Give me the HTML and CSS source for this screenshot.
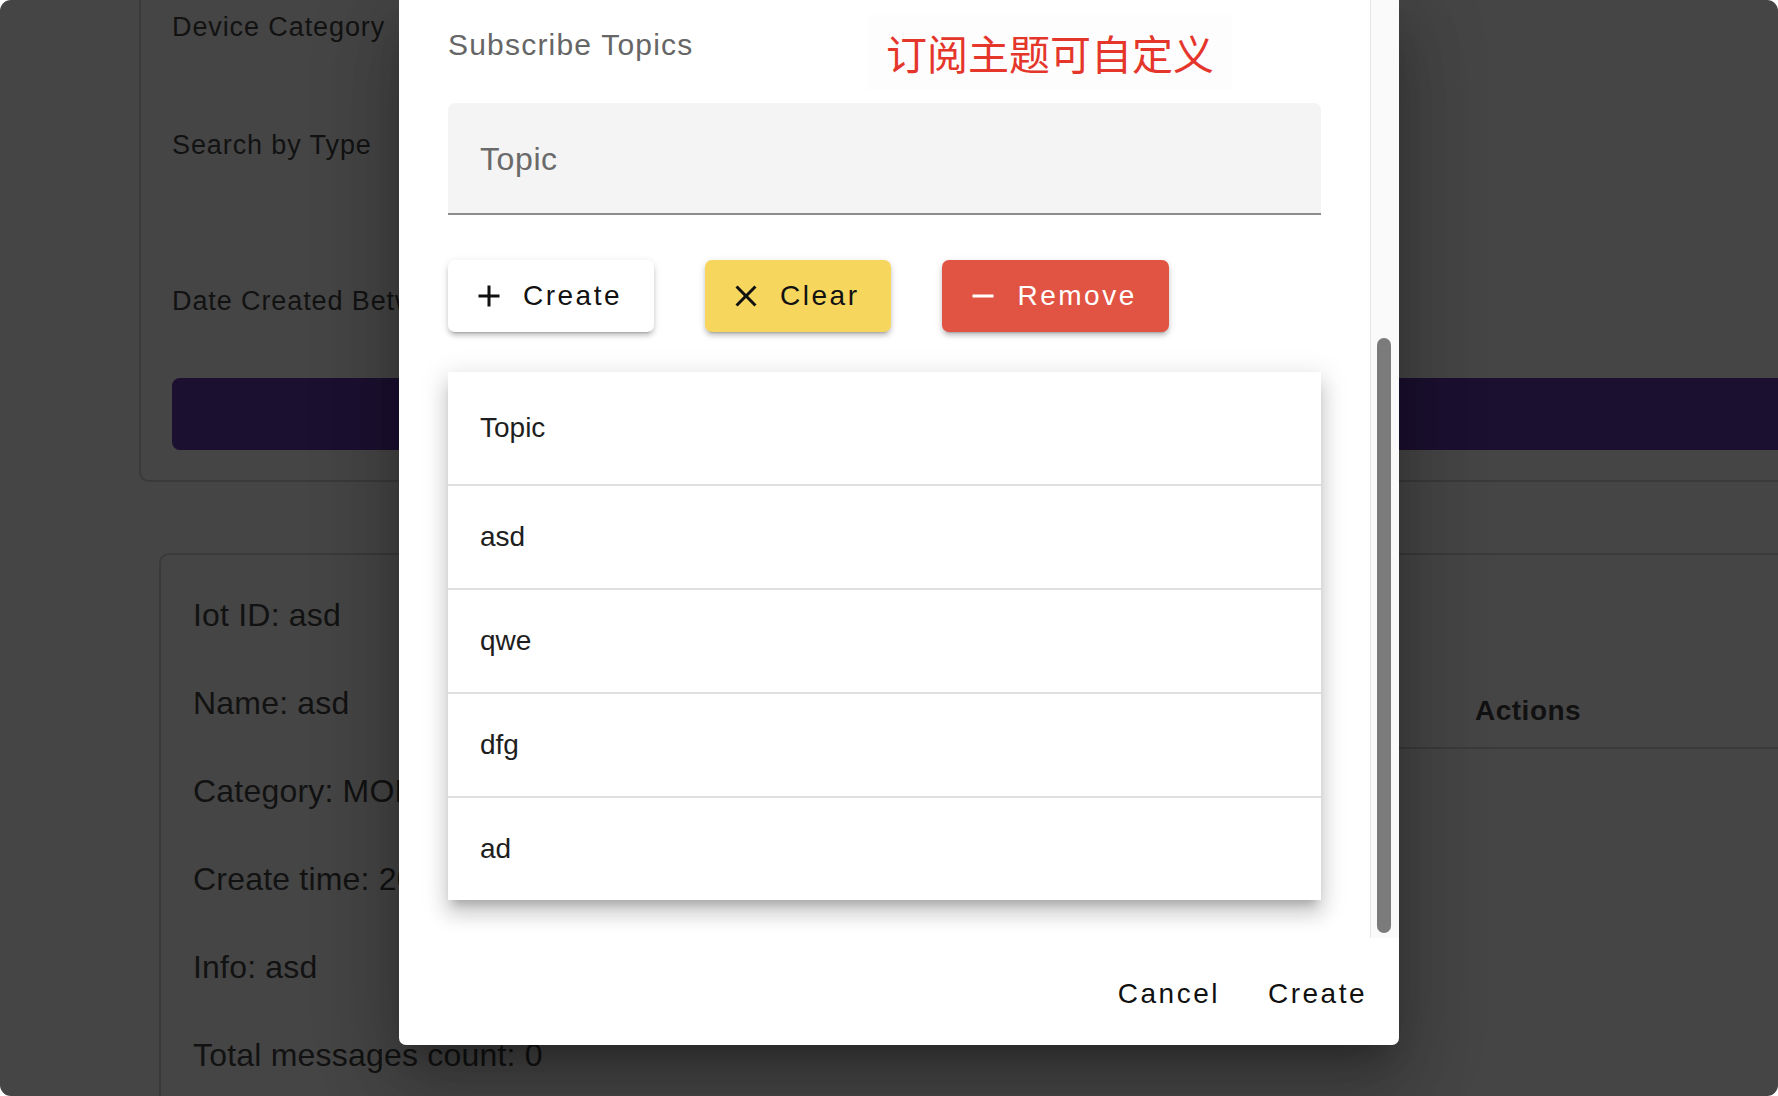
FILE: index.html
```html
<!DOCTYPE html>
<html lang="en">
<head>
<meta charset="utf-8">
<title>Subscribe Topics</title>
<link rel="stylesheet" href="styles.css">
</head>
<body>
<div class="window">
  <div class="page">
    <section class="filter-card">
      <div class="filter-label first">Device Category</div>
      <div class="filter-label second">Search by Type</div>
      <div class="filter-label third">Date Created Between</div>
      <div class="search-bar"></div>
    </section>
    <section class="device-card">
      <div class="device-info">
        <div class="info-line">Iot ID: asd</div>
        <div class="info-line">Name: asd</div>
        <div class="info-line">Category: MONITOR</div>
        <div class="info-line">Create time: 2023-05-12 10:21:33</div>
        <div class="info-line">Info: asd</div>
        <div class="info-line">Total messages count: 0</div>
      </div>
      <div class="device-table">
        <div class="thead">
          <span class="th">Topic</span>
          <span class="th">Message</span>
          <span class="th actions">Actions</span>
        </div>
      </div>
    </section>
  </div>

  <div class="dialog">
    <div class="dialog-body">
      <div class="dialog-content">
        <div class="field-label">Subscribe Topics</div>
        <div class="text-field"><span class="placeholder">Topic</span></div>
        <div class="actions-row">
          <button class="btn btn-white">
            <svg class="btn-icon" viewBox="0 0 24 24"><path d="M19 13h-6v6h-2v-6H5v-2h6V5h2v6h6v2z"/></svg>
            <span class="btn-text">Create</span>
          </button>
          <button class="btn btn-yellow">
            <svg class="btn-icon" viewBox="0 0 24 24"><path d="M19 6.41L17.59 5 12 10.59 6.41 5 5 6.41 10.59 12 5 17.59 6.41 19 12 13.41 17.59 19 19 17.59 13.41 12z"/></svg>
            <span class="btn-text">Clear</span>
          </button>
          <button class="btn btn-red">
            <svg class="btn-icon" viewBox="0 0 24 24"><path d="M19 13H5v-2h14v2z"/></svg>
            <span class="btn-text">Remove</span>
          </button>
        </div>
        <ul class="topic-list">
          <li class="topic-row head">Topic</li>
          <li class="topic-row">asd</li>
          <li class="topic-row">qwe</li>
          <li class="topic-row">dfg</li>
          <li class="topic-row last">ad</li>
        </ul>
      </div>
      <div class="scrollbar"><div class="thumb"></div></div>
    </div>
    <div class="dialog-footer">
      <button class="text-btn">Cancel</button>
      <button class="text-btn">Create</button>
    </div>
    <div class="annotation">订阅主题可自定义</div>
  </div>
</div>
</body>
</html>
```

FILE: styles.css
```css
* { box-sizing: border-box; }

html, body {
  margin: 0;
  padding: 0;
  background: #ffffff;
}

body {
  font-family: "Liberation Sans", Arial, sans-serif;
  width: 1778px;
  height: 1096px;
  overflow: hidden;
}

.window {
  position: relative;
  width: 1778px;
  height: 1096px;
  border-radius: 11px;
  overflow: hidden;
  background: #454545;
}

.page {
  display: flex;
  flex-direction: column;
}

/* background filter card */
.filter-card {
  margin: -30px -60px 0 139px;
  border: 2px solid #3a3a3a;
  border-radius: 10px;
  padding: 39px 0 30px 31px;
  display: flex;
  flex-direction: column;
}

.filter-label {
  font-size: 27px;
  line-height: 32px;
  height: 32px;
  letter-spacing: 0.9px;
  color: #121212;
  white-space: nowrap;
}
.filter-label.second { margin-top: 86px; }
.filter-label.third { margin-top: 124px; }

.search-bar {
  margin-top: 61px;
  height: 72px;
  border-radius: 8px;
  background: #1b1030;
}

/* background device card */
.device-card {
  margin: 71px -60px 0 159px;
  border: 2px solid #3a3a3a;
  border-radius: 10px;
  display: flex;
  height: 700px;
}

.device-info {
  width: 640px;
  padding: 41px 0 0 32px;
  display: flex;
  flex-direction: column;
  gap: 50px;
}

.info-line {
  font-size: 32px;
  line-height: 38px;
  letter-spacing: 0.2px;
  color: #121212;
  white-space: nowrap;
}

.device-table {
  flex: 1;
  padding-top: 120px;
}

.thead {
  display: flex;
  height: 74px;
  align-items: center;
  border-bottom: 2px solid #3a3a3a;
}

.th {
  flex: 1;
  font-size: 28px;
  font-weight: 700;
  color: #111;
  letter-spacing: 0.5px;
}

.th.actions {
  flex: 0 0 361px;
}

/* dialog */
.dialog {
  position: absolute;
  left: 399px;
  top: 0;
  width: 1000px;
  height: 1045px;
  background: #ffffff;
  border-radius: 0 0 7px 7px;
  box-shadow: 0 20px 27px -13px rgba(0,0,0,0.25),
              0 43px 68px 5px rgba(0,0,0,0.16),
              0 16px 83px 14px rgba(0,0,0,0.14);
  display: flex;
  flex-direction: column;
}

.dialog-body {
  display: flex;
  height: 938px;
}

.dialog-content {
  flex: 1;
  padding: 27px 49px 0 49px;
  overflow: hidden;
}

.field-label {
  font-size: 30px;
  line-height: 35px;
  letter-spacing: 1.2px;
  color: #666666;
}

.text-field {
  margin-top: 41px;
  height: 112px;
  padding: 37px 32px 0;
  background: #f4f4f4;
  border-bottom: 2px solid #8c8c8c;
  border-radius: 7px 7px 0 0;
}

.placeholder {
  display: block;
  font-size: 32px;
  line-height: 1.2;
  letter-spacing: 0.6px;
  color: #6a6a6a;
}

.actions-row {
  margin-top: 45px;
  display: flex;
  gap: 51px;
}

.btn {
  height: 72px;
  display: flex;
  align-items: center;
  gap: 16px;
  padding: 0 32px 0 23px;
  border: none;
  border-radius: 7px;
  font-family: "Liberation Sans", Arial, sans-serif;
  font-size: 28px;
  letter-spacing: 2.5px;
  cursor: pointer;
  box-shadow: 0 5px 2px -4px rgba(0,0,0,0.2),
              0 4px 4px 0 rgba(0,0,0,0.14),
              0 2px 9px 0 rgba(0,0,0,0.12);
}

.btn-icon {
  width: 36px;
  height: 36px;
  fill: currentColor;
  flex: none;
}

.btn-white { background: #ffffff; color: #111; }
.btn-yellow { background: #f7d65e; color: #111; }
.btn-red { background: #e15443; color: #ffffff; }

.topic-list {
  list-style: none;
  margin: 40px 0 0;
  padding: 10px 0 0;
  background: #ffffff;
  box-shadow: 0 9px 9px -5px rgba(0,0,0,0.2),
              0 14px 18px 2px rgba(0,0,0,0.12),
              0 5px 25px 4px rgba(0,0,0,0.1);
}

.topic-row {
  height: 104px;
  display: flex;
  align-items: center;
  padding-left: 32px;
  border-bottom: 2px solid #e0e0e0;
  font-size: 28px;
  color: #1e1e1e;
}

.topic-row.head { padding-bottom: 10px; }
.topic-row.last { height: 102px; border-bottom: none; }

.scrollbar {
  width: 29px;
  flex: none;
  border-left: 1px solid #e6e6e6;
  background: #fafafa;
}

.thumb {
  margin: 338px 0 0 6px;
  width: 14px;
  height: 595px;
  border-radius: 7px;
  background: #7b7b7b;
}

.dialog-footer {
  height: 107px;
  display: flex;
  justify-content: flex-end;
  align-items: center;
  gap: 12px;
  padding: 4px 14px 0 0;
}

.text-btn {
  height: 66px;
  padding: 0 18px;
  border: none;
  background: none;
  font-family: "Liberation Sans", Arial, sans-serif;
  font-size: 28px;
  letter-spacing: 2.5px;
  color: #111;
  cursor: pointer;
}

.annotation {
  position: absolute;
  left: 469px;
  top: 15px;
  padding: 17px 18px;
  background: #fdfdfd;
  font-family: "Noto Sans CJK SC", sans-serif;
  font-size: 41px;
  line-height: 41px;
  color: #e5362c;
  white-space: nowrap;
}
```
